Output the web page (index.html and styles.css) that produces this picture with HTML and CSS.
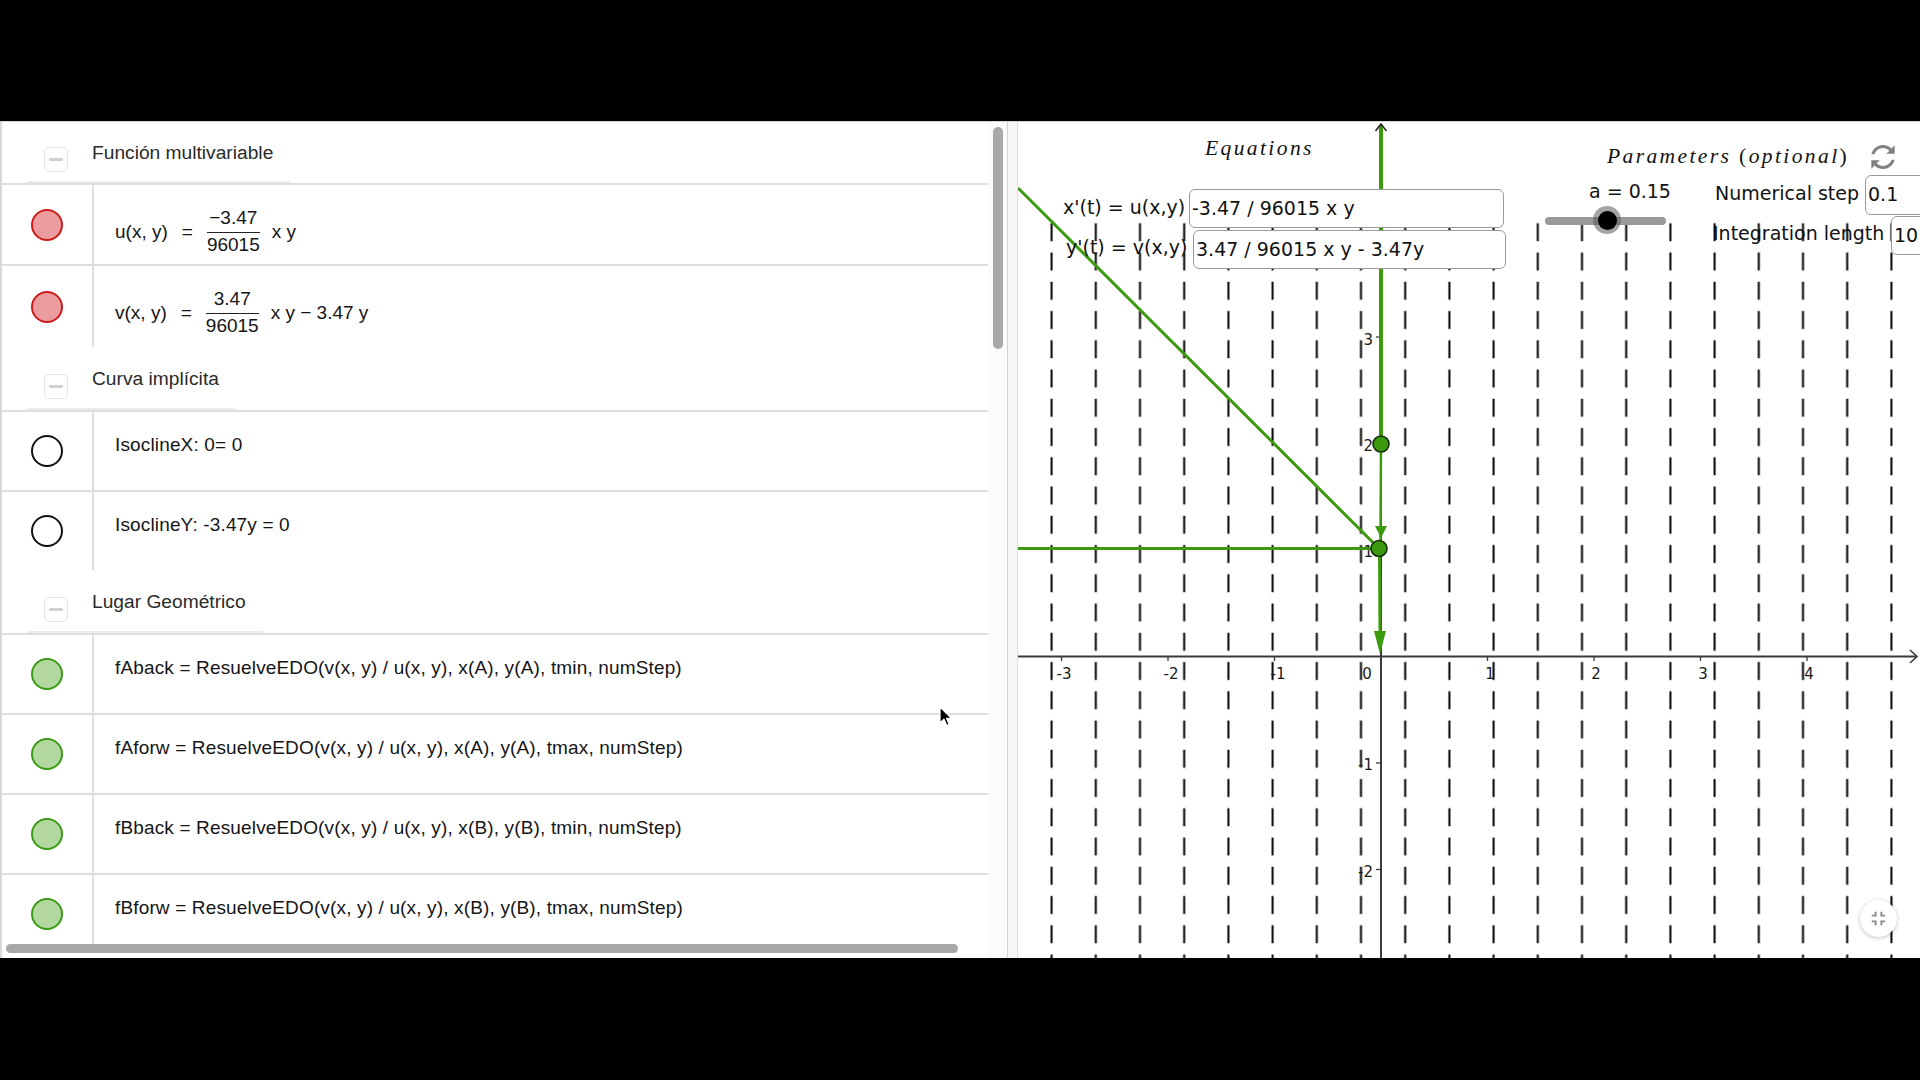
FILE: index.html
```html
<!DOCTYPE html>
<html lang="es">
<head>
<meta charset="utf-8">
<title>Campo de direcciones</title>
<link rel="stylesheet" href="styles.css">
</head>
<body>
<div class="top-bar"></div>
<div class="applet">
  <div class="algebra">
    <div class="av-list">
      <div class="group-head first"><div class="gh"><span class="toggle"></span><span class="gh-title">Función multivariable</span></div></div>
      <div class="av-row row-u">
        <div class="marble"><span class="dot red"></span></div>
        <div class="av-body math"><span>u(x, y)</span><span class="eq">=</span><span class="frac"><span class="num">−3.47</span><span class="den">96015</span></span><span class="tail">x y</span></div>
      </div>
      <div class="av-row row-v">
        <div class="marble"><span class="dot red"></span></div>
        <div class="av-body math"><span>v(x, y)</span><span class="eq">=</span><span class="frac"><span class="num">3.47</span><span class="den">96015</span></span><span class="tail">x y − 3.47 y</span></div>
      </div>
      <div class="group-head"><div class="gh"><span class="toggle"></span><span class="gh-title">Curva implícita</span></div></div>
      <div class="av-row">
        <div class="marble"><span class="dot black"></span></div>
        <div class="av-body">IsoclineX: 0= 0</div>
      </div>
      <div class="av-row">
        <div class="marble"><span class="dot black"></span></div>
        <div class="av-body">IsoclineY: -3.47y = 0</div>
      </div>
      <div class="group-head"><div class="gh"><span class="toggle"></span><span class="gh-title">Lugar Geométrico</span></div></div>
      <div class="av-row">
        <div class="marble"><span class="dot green"></span></div>
        <div class="av-body">fAback = ResuelveEDO(v(x, y) / u(x, y), x(A), y(A), tmin, numStep)</div>
      </div>
      <div class="av-row">
        <div class="marble"><span class="dot green"></span></div>
        <div class="av-body">fAforw = ResuelveEDO(v(x, y) / u(x, y), x(A), y(A), tmax, numStep)</div>
      </div>
      <div class="av-row">
        <div class="marble"><span class="dot green"></span></div>
        <div class="av-body">fBback = ResuelveEDO(v(x, y) / u(x, y), x(B), y(B), tmin, numStep)</div>
      </div>
      <div class="av-row">
        <div class="marble"><span class="dot green"></span></div>
        <div class="av-body">fBforw = ResuelveEDO(v(x, y) / u(x, y), x(B), y(B), tmax, numStep)</div>
      </div>
    </div>
    <div class="vscroll"><div class="vthumb"></div></div>
    <div class="hthumb"></div>
    <svg class="cursor" width="14" height="21" viewBox="0 0 14 21"><path d="M1 1 L1 17 L5 13.2 L7.8 19.5 L10.2 18.4 L7.5 12.3 L12.6 12.3 Z" fill="#000" stroke="#fff" stroke-width="1.2" stroke-linejoin="round"/></svg>
  </div>
  <div class="splitter"></div>
  <div class="graphics">
    <svg class="plot" width="902" height="836" viewBox="1018 122 902 836">
      <defs>
        <pattern id="field" patternUnits="userSpaceOnUse" x="1029.5" y="217.625" width="44.2" height="29.25">
          <line x1="22.1" y1="5.625" x2="22.1" y2="23.625" stroke="#000" stroke-width="2"/>
        </pattern>
      </defs>
      <rect x="1018" y="222" width="902" height="740" fill="url(#field)"/>
      <g stroke="#3a3a3a" fill="none">
        <line x1="1018" y1="656.5" x2="1917" y2="656.5" stroke-width="2"/>
        <line x1="1381" y1="958" x2="1381" y2="125" stroke-width="2"/>
        <g stroke-width="1.3">
          <line x1="1061.5" y1="656" x2="1061.5" y2="661"/>
          <line x1="1168" y1="656" x2="1168" y2="661"/>
          <line x1="1274.5" y1="656" x2="1274.5" y2="661"/>
          <line x1="1487.5" y1="656" x2="1487.5" y2="661"/>
          <line x1="1594" y1="656" x2="1594" y2="661"/>
          <line x1="1700.5" y1="656" x2="1700.5" y2="661"/>
          <line x1="1807" y1="656" x2="1807" y2="661"/>
          <line x1="1376" y1="337" x2="1381" y2="337"/>
          <line x1="1376" y1="443.5" x2="1381" y2="443.5"/>
          <line x1="1376" y1="550" x2="1381" y2="550"/>
          <line x1="1376" y1="763" x2="1381" y2="763"/>
          <line x1="1376" y1="869.5" x2="1381" y2="869.5"/>
        </g>
        <polyline points="1910,650 1917,656.5 1910,663" stroke-width="1.6"/>
      </g>
      <g class="ticklbl" font-family="DejaVu Sans" font-size="15" fill="#1a1a1a">
        <text x="1064" y="678.5" text-anchor="middle">-3</text>
        <text x="1171" y="678.5" text-anchor="middle">-2</text>
        <text x="1278" y="678.5" text-anchor="middle">-1</text>
        <text x="1367" y="678.5" text-anchor="middle">0</text>
        <text x="1490" y="678.5" text-anchor="middle">1</text>
        <text x="1596" y="678.5" text-anchor="middle">2</text>
        <text x="1703" y="678.5" text-anchor="middle">3</text>
        <text x="1809" y="678.5" text-anchor="middle">4</text>
        <text x="1373" y="344.5" text-anchor="end">3</text>
        <text x="1373" y="451" text-anchor="end">2</text>
        <text x="1373" y="557" text-anchor="end">1</text>
        <text x="1373" y="770" text-anchor="end">-1</text>
        <text x="1373" y="876.5" text-anchor="end">-2</text>
      </g>
      <g stroke="#3c9a0e" fill="none">
        <line x1="1381" y1="126" x2="1381" y2="444" stroke-width="4"/>
        <line x1="1381" y1="444" x2="1380.5" y2="540" stroke-width="2.5"/>
        <line x1="1379.5" y1="548.5" x2="1380" y2="634" stroke-width="3"/>
        <line x1="1018" y1="548.5" x2="1379" y2="548.5" stroke-width="3"/>
        <line x1="1018" y1="188" x2="1379" y2="548.5" stroke-width="3"/>
      </g>
      <g fill="#3c9a0e">
        <polygon points="1375,526 1387,526 1381,538"/>
        <polygon points="1374,631 1386,631 1380,654"/>
      </g>
      <circle cx="1381" cy="444" r="8" fill="#3c9a0e" stroke="#173007" stroke-width="1.6"/>
      <circle cx="1379" cy="548.5" r="8" fill="#3c9a0e" stroke="#173007" stroke-width="1.6"/>
      <polyline points="1375.5,131 1381,124 1386.5,131" fill="none" stroke="#222" stroke-width="1.5"/>
    </svg>

    <div class="ov title eqs-title">Equations</div>
    <div class="ov title params-title">Parameters <span class="up">(</span>optional<span class="up">)</span></div>
    <svg class="ov refresh" width="36" height="36" viewBox="0 0 24 24"><path transform="rotate(45 12 12) translate(24 0) scale(-1 1)" fill="#808080" d="M12 4V1L8 5l4 4V6c3.31 0 6 2.69 6 6 0 1.01-.25 1.97-.7 2.8l1.46 1.46C19.54 15.03 20 13.57 20 12c0-4.42-3.58-8-8-8zm0 14c-3.31 0-6-2.69-6-6 0-1.01.25-1.97.7-2.8L5.24 7.74C4.46 8.97 4 10.43 4 12c0 4.42 3.58 8 8 8v3l4-4-4-4v3z"/></svg>

    <div class="ov gtext lbl-x">x'(t) = u(x,y)</div>
    <div class="ov field in1">-3.47 / 96015 x y</div>
    <div class="ov gtext lbl-y">y'(t) = v(x,y)</div>
    <div class="ov field in2">3.47 / 96015 x y - 3.47y</div>

    <div class="ov gtext a-val">a = 0.15</div>
    <div class="ov track"></div>
    <div class="ov knob"><span class="knob-core"></span></div>

    <div class="ov gtext num-step">Numerical step</div>
    <div class="ov field in-step">0.1</div>
    <div class="ov gtext int-len">Integration length</div>
    <div class="ov field in-len">10</div>

    <div class="ov fs-btn"><svg width="23" height="23" viewBox="0 0 24 24"><path fill="#8a8a8a" d="M5 16h3v3h2v-5H5v2zm3-8H5v2h5V5H8v3zm6 11h2v-3h3v-2h-5v5zm2-11V5h-2v5h5V8h-3z"/></svg></div>
  </div>
</div>
<div class="bottom-bar"></div>
</body>
</html>
```

FILE: styles.css
```css
* { box-sizing: border-box; }
html, body { margin: 0; padding: 0; background: #000; }
body {
  width: 1920px;
  height: 1080px;
  overflow: hidden;
  font-family: "Liberation Sans", Arial, sans-serif;
}
.top-bar { height: 121px; }
.bottom-bar { height: 122px; }

.applet {
  height: 837px;
  display: flex;
  background: #fff;
  border-top: 1px solid #d3d3d3;
}

/* ---------- Algebra view ---------- */
.algebra {
  position: relative;
  width: 1007px;
  flex-shrink: 0;
  display: flex;
  border-left: 2px solid #d8d8d8;
  background: #fff;
  overflow: hidden;
}
.av-list { width: 986px; flex-shrink: 0; }
.vscroll {
  width: 19px;
  flex-shrink: 0;
  background: #fbfbfb;
  padding: 5px 4px 0 5px;
}
.vthumb {
  width: 10px;
  height: 222px;
  border-radius: 5px;
  background: #a8a8a8;
}
.hthumb {
  position: absolute;
  left: 4px;
  top: 822px;
  width: 952px;
  height: 9px;
  border-radius: 5px;
  background: #a8a8a8;
}
.cursor { position: absolute; left: 937px; top: 584px; }

.group-head { height: 63px; padding-left: 25px; }
.group-head.first { height: 61px; }
.gh {
  display: inline-flex;
  align-items: flex-start;
  height: 100%;
  padding: 0 17px;
  border-bottom: 2px solid #ececec;
}
.toggle {
  width: 24px;
  height: 25px;
  margin-top: 27px;
  border: 1px solid #e4e4e4;
  border-radius: 5px;
  display: flex;
  align-items: center;
  justify-content: center;
}
.first .toggle { margin-top: 25px; }
.toggle::before {
  content: "";
  width: 14px;
  height: 3px;
  border-radius: 1px;
  background: #d0d0d0;
}
.gh-title {
  margin-left: 24px;
  margin-top: 21px;
  font-size: 19.2px;
  line-height: 22px;
  color: #2a2a2a;
  white-space: nowrap;
}
.first .gh-title { margin-top: 20px; }

.av-row {
  display: flex;
  height: 80px;
  border-top: 2px solid #dedede;
}
.av-row.row-u { height: 81px; }
.av-row.row-v { height: 83px; }
.marble {
  width: 92px;
  flex-shrink: 0;
  border-right: 2px solid #e0e0e0;
  display: flex;
  align-items: center;
  justify-content: center;
}
.dot {
  width: 32px;
  height: 32px;
  border-radius: 50%;
  border: 2px solid;
}
.dot.red { background: #eb9c9e; border-color: #cc1b1b; }
.dot.black { background: #fff; border-color: #111; }
.dot.green { background: #b3d8a0; border-color: #3a9a14; }

.av-body {
  padding: 22px 0 0 21px;
  font-size: 19px;
  line-height: 22px;
  letter-spacing: 0.15px;
  color: #151515;
  white-space: nowrap;
}
.av-body.math {
  display: flex;
  align-items: center;
  align-self: flex-start;
  padding-top: 23px;
  letter-spacing: 0;
}
.eq { margin: 0 14px; }
.frac {
  display: inline-flex;
  flex-direction: column;
  align-items: center;
}
.num { line-height: 20px; padding: 0 1px 4px; }
.den {
  line-height: 20px;
  padding: 2px 0 0;
  border-top: 1.5px solid #222;
}
.tail { margin-left: 12px; }

/* ---------- Splitter ---------- */
.splitter {
  width: 11px;
  flex-shrink: 0;
  background: #f6f6f6;
  border-left: 1px solid #d2d2d2;
  border-right: 1px solid #e0e0e0;
}

/* ---------- Graphics view ---------- */
.graphics {
  position: relative;
  flex: 1;
  overflow: hidden;
  background: #fff;
}
.plot { position: absolute; left: 0; top: 0; }
.ov { position: absolute; }

.title {
  font-family: "Liberation Serif", "Times New Roman", serif;
  font-style: italic;
  font-size: 21.5px;
  line-height: 21px;
  letter-spacing: 2.4px;
  color: #111;
  white-space: nowrap;
}
.title .up { font-style: normal; }
.eqs-title { left: 187px; top: 16px; }
.params-title { left: 589px; top: 24px; }
.refresh { left: 847px; top: 17px; }

.gtext {
  font-family: "DejaVu Sans", sans-serif;
  font-size: 19px;
  line-height: 22px;
  color: #111;
  white-space: nowrap;
}
.lbl-x { left: 45px; top: 74px; }
.lbl-y { left: 48px; top: 114px; }
.a-val { left: 571px; top: 58px; }
.num-step { left: 697px; top: 60px; }
.int-len { left: 695px; top: 100px; }

.field {
  font-family: "DejaVu Sans", sans-serif;
  font-size: 19px;
  line-height: 37px;
  color: #111;
  background: #fff;
  border: 1px solid #9a9a9a;
  border-radius: 6px;
  padding-left: 2px;
  white-space: nowrap;
  overflow: hidden;
}
.in1 { left: 171px; top: 67px; width: 315px; height: 39px; }
.in2 { left: 175px; top: 108px; width: 313px; height: 39px; }
.in-step { left: 847px; top: 53px; width: 80px; height: 40px; }
.in-len { left: 873px; top: 94px; width: 60px; height: 39px; }

.track {
  left: 527px;
  top: 95px;
  width: 121px;
  height: 8px;
  border-radius: 4px;
  background: #9a9a9a;
}
.knob {
  left: 575px;
  top: 84px;
  width: 28px;
  height: 28px;
  border-radius: 50%;
  background: rgba(90, 90, 90, 0.55);
  display: flex;
  align-items: center;
  justify-content: center;
}
.knob-core {
  width: 19px;
  height: 19px;
  border-radius: 50%;
  background: #000;
}

.fs-btn {
  left: 842px;
  top: 778px;
  width: 37px;
  height: 37px;
  border-radius: 50%;
  background: #fff;
  box-shadow: 0 1px 4px rgba(0, 0, 0, 0.25);
  display: flex;
  align-items: center;
  justify-content: center;
}
```
